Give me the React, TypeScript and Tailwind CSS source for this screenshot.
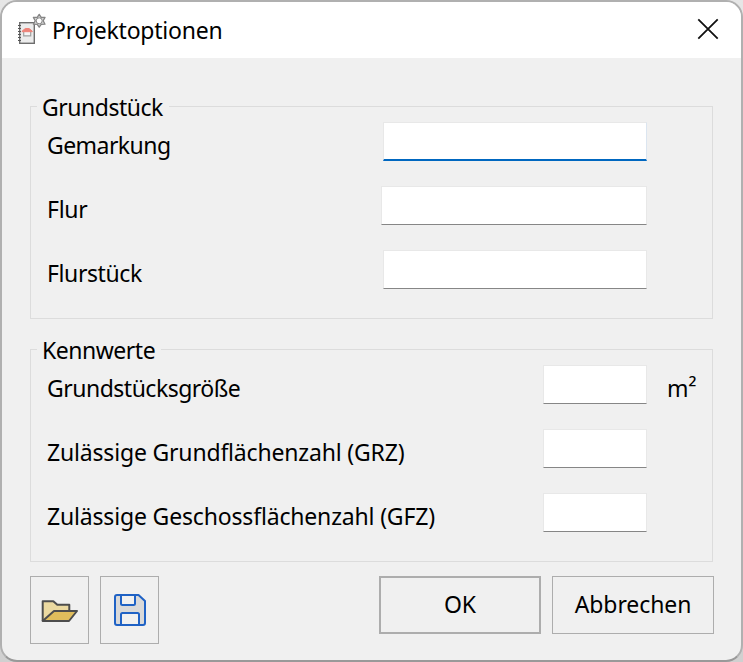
import React from "react";

const PLOT_FIELDS = [
  { id: "gemarkung", label: "Gemarkung", tracking: "tracking-[-0.55px]", input: "mr-[65px] w-[264px] h-[39px] border-b-2 border-b-[#0067c0] border-r-[#dbe5f0]" },
  { id: "flur", label: "Flur", tracking: "tracking-[-0.3px]", input: "mr-[65px] w-[266px] h-[39px] border-b-[#868686]" },
  { id: "flurstueck", label: "Flurstück", tracking: "tracking-[-0.4px]", input: "mr-[65px] w-[264px] h-[39px] border-b-[#868686]" },
];

const VALUE_FIELDS = [
  { id: "groesse", label: "Grundstücksgröße", tracking: "tracking-[-0.5px]", input: "mr-[65px] w-[104px] h-[39px] border-b-[#868686]", unit: true },
  { id: "grz", label: "Zulässige Grundflächenzahl (GRZ)", tracking: "tracking-[-0.18px]", input: "mr-[65px] w-[104px] h-[39px] border-b-[#868686]" },
  { id: "gfz", label: "Zulässige Geschossflächenzahl (GFZ)", tracking: "tracking-[-0.17px]", input: "mr-[65px] w-[104px] h-[39px] border-b-[#868686]" },
];

type Field = {
  id: string;
  label: string;
  tracking: string;
  input: string;
  unit?: boolean;
};

function ProjectIcon() {
  return (
    <svg width="30" height="32" viewBox="0 0 30 32" fill="none">
      <rect x="2.7" y="9.7" width="14.6" height="20.600" fill="#ececec" stroke="#6e6e6e" strokeWidth="1.4" />
      <path d="M1 12.500h3M1 15.500h3M1 18.500h3M1 21.500h3M1 24.500h3M1 27.500h3" stroke="#555" />
      <path d="M6.700 18.500v4.300h7v-4.300" fill="#f5f5f5" stroke="#a0a0a0" strokeWidth="1.200" />
      <path d="M5.200 18.700v-.7L8.400 15.500h3.600l3.200 2.500v.7z" fill="#ee8379" stroke="#ee8379" strokeLinejoin="round" />
      <path
        d="M22.200 1.400 24.200 4.300 28 4.400 26.200 7.800 28 11.200 24.200 11.300 22.200 14.200 20.200 11.300 16.400 11.200 18.200 7.800 16.400 4.400 20.200 4.300z"
        fill="#d4d4d4"
        stroke="#858585"
        strokeWidth="1.300"
        strokeLinejoin="round"
      />
      <circle cx="22.200" cy="7.800" r="3" fill="#fff" stroke="#858585" />
    </svg>
  );
}

function OpenIcon() {
  return (
    <svg width="41" height="40" viewBox="0 0 41 40" fill="none" stroke="#4d4d4d" strokeWidth="2" strokeLinejoin="round">
      <path d="M3.700 31V11.200h10.600l4 3.600h12V31z" fill="#ebd9a0" stroke="none" />
      <path d="M3.700 31 15 21h23L30 31z" fill="#e0bd5c" />
      <path d="M30.300 21v-6.200h-12l-4-3.600H3.700V31" />
    </svg>
  );
}

function SaveIcon() {
  return (
    <svg width="41" height="40" viewBox="0 0 41 40" fill="none" stroke="#1f62c5" strokeWidth="2" strokeLinejoin="round">
      <path d="M8 5h21.500l6.500 6v22a2 2 0 0 1-2 2H8a2 2 0 0 1-2-2V7a2 2 0 0 1 2-2z" fill="#d9d9d9" />
      <path d="M12 5v8.500a1.500 1.500 0 0 0 1.500 1.500h11a1.500 1.500 0 0 0 1.500-1.500V5z" fill="#f0f0f0" />
      <path d="M12 35V24.500a1.500 1.500 0 0 1 1.500-1.500h15a1.500 1.500 0 0 1 1.500 1.500V35z" fill="#f0f0f0" />
    </svg>
  );
}

function Group({ title, fields }: { title: string; fields: Field[] }) {
  return (
    <section className="h-[213px] border border-[#dcdcdc]">
      <h2 className="ml-1.5 -mt-4 w-fit bg-[#f0f0f0] pl-[5px] pr-1.5 tracking-[-0.48px]">{title}</h2>
      <div className="-mt-px flex flex-col gap-6 pl-4">
        {fields.map((field) => (
          <div key={field.id} className="flex h-10 items-start justify-between">
            <label htmlFor={field.id} className={`mt-[7px] whitespace-nowrap ${field.tracking}`}>
              {field.label}
            </label>
            <div className="flex">
              <input id={field.id} className={`border border-t-[#e8e8e8] border-x-[#e8e8e8] bg-white outline-none ${field.input}`} />
              {field.unit && (
                <span className="-ml-[46px] mt-[7px] flex w-[46px]">
                  <span className="ml-px">m</span>
                  <span className="-mt-px">²</span>
                </span>
              )}
            </div>
          </div>
        ))}
      </div>
    </section>
  );
}

export default function App() {
  return (
    <div className="h-[662px] w-[743px] overflow-hidden bg-linear-to-b from-[#e6e6e6] to-[#d0d0d0] font-['Noto_Sans',sans-serif] text-[23px] leading-8 text-black">
      <div className="flex h-full flex-col overflow-hidden rounded-[17px] border-2 border-[#b0b0b0] border-b-[#999] bg-[#f0f0f0]">
        <header className="flex h-14 shrink-0 items-center bg-white pl-[15px] pr-[21px]">
          <div className="mb-0.5">
            <ProjectIcon />
          </div>
          <h1 className="ml-[5px] grow tracking-[-0.24px]">Projektoptionen</h1>
          <button aria-label="Schließen" className="mb-0.5">
            <svg width="24" height="24" viewBox="0 0 24 24" stroke="#111" strokeWidth="1.8">
              <path d="m2.300 2.300 19.400 19.400M21.700 2.300 2.300 21.700" />
            </svg>
          </button>
        </header>

        <main className="flex flex-col gap-[30px] pl-7 pr-7 pt-12">
          <Group title="Grundstück" fields={PLOT_FIELDS} />
          <Group title="Kennwerte" fields={VALUE_FIELDS} />
        </main>

        <footer className="flex items-start pl-7 pr-[27px] pt-3.5">
          <button aria-label="Öffnen" className="flex h-[68px] w-[59px] items-center justify-center border border-[#adadad]">
            <OpenIcon />
          </button>
          <button aria-label="Speichern" className="ml-[11px] flex h-[68px] w-[59px] items-center justify-center border border-[#adadad]">
            <SaveIcon />
          </button>
          <button className="ml-auto h-[58px] w-[162px] border-2 border-[#adadad] pb-0.5">OK</button>
          <button className="ml-[11px] h-[58px] w-[162px] border border-[#adadad] pb-0.5 tracking-[-0.1px]">Abbrechen</button>
        </footer>
      </div>
    </div>
  );
}
